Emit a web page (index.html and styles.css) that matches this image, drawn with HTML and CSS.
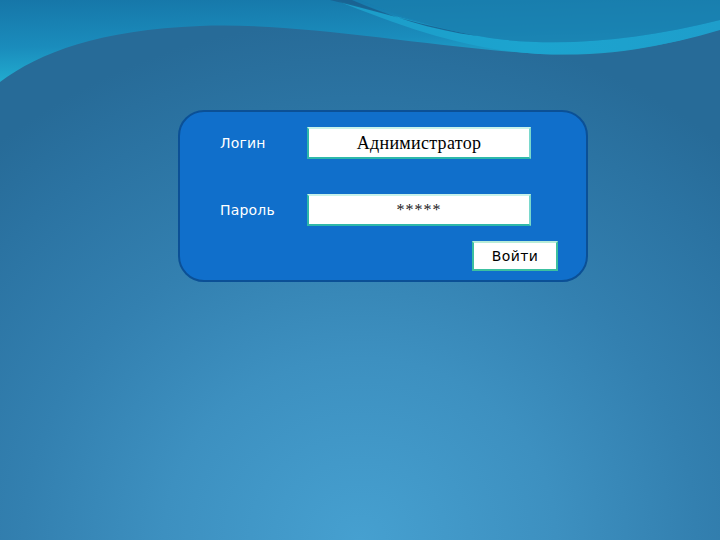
FILE: index.html
```html
<!DOCTYPE html>
<html lang="ru">
<head>
<meta charset="utf-8">
<title>Вход</title>
<link rel="stylesheet" href="styles.css">
</head>
<body>
<div class="page">
  <svg class="waves" width="720" height="90" viewBox="0 0 720 90" aria-hidden="true">
    <defs>
      <linearGradient id="band" x1="0" y1="0" x2="0.25" y2="1">
        <stop offset="0" stop-color="#1676a8"/>
        <stop offset="0.55" stop-color="#1a8cbc"/>
        <stop offset="1" stop-color="#22b0d2"/>
      </linearGradient>
      <linearGradient id="light" x1="0" y1="0" x2="1" y2="0">
        <stop offset="0" stop-color="#1c9cc8"/>
        <stop offset="0.5" stop-color="#1ca4cf"/>
        <stop offset="1" stop-color="#1e9ecb"/>
      </linearGradient>
    </defs>
    <path d="M0 0 L720 0 L720 28 C680 42 620 58 540 54 C420 46 300 22 200 26 C100 30 40 52 0 82 Z" fill="url(#band)"/>
    <path d="M335 0 C390 14 440 30 490 38 C560 48 640 40 720 20 L720 30 C660 48 600 56 540 54 C470 50 410 30 335 0 Z" fill="url(#light)"/>
    <path d="M330 0 C380 12 425 26 478 36 C430 30 390 16 352 0 Z" fill="#1a5f8e" opacity="0.85"/>
    <path d="M360 0 L720 0 L720 20 C640 40 560 48 490 38 C440 30 400 16 360 0 Z" fill="#1a7fae" opacity="0.7"/>
  </svg>
  <form class="panel">
    <div class="grid">
      <label class="label">Логин</label>
      <div class="field serif">Аднимистратор</div>
      <label class="label">Пароль</label>
      <div class="field serif stars">*****</div>
    </div>
    <div class="actions">
      <div class="button">Войти</div>
    </div>
  </form>
</div>
</body>
</html>
```

FILE: styles.css
```css
html, body {
  margin: 0;
  padding: 0;
}
body {
  width: 720px;
  height: 540px;
  overflow: hidden;
  font-family: "DejaVu Sans", "Liberation Sans", sans-serif;
}
.page {
  position: relative;
  width: 720px;
  height: 540px;
  background: radial-gradient(ellipse 560px 520px at 50% 100%, #46a0d0 0%, #3d90c0 35%, #3380b0 60%, #2b73a2 85%, #276b98 100%);
  overflow: hidden;
}
.waves {
  position: absolute;
  left: 0;
  top: 0;
  display: block;
}
.panel {
  position: relative;
  margin: 0;
  top: 110px;
  left: 178px;
  width: 406px;
  height: 168px;
  box-sizing: content-box;
  border: 2px solid #0b5096;
  border-radius: 26px;
  background: #106fcb;
  padding: 0;
}
.grid {
  display: grid;
  grid-template-columns: 87px 224px;
  row-gap: 35px;
  padding: 15px 0 0 40px;
  align-items: center;
}
.label {
  color: #ffffff;
  font-size: 14px;
  letter-spacing: 0.2px;
}
.field {
  box-sizing: border-box;
  height: 32px;
  background: #ffffff;
  border: 2px solid #2eb8aa;
  border-top-color: #c8f2ea;
  border-right-color: #7ad8cc;
  display: flex;
  align-items: center;
  justify-content: center;
}
.serif {
  font-family: "Liberation Serif", "DejaVu Serif", serif;
  font-size: 18px;
  color: #000000;
  letter-spacing: 0.3px;
}
.stars {
  font-size: 16px;
  color: #222222;
  letter-spacing: 1px;
}
.actions {
  display: flex;
  padding: 15px 0 0 292px;
}
.button {
  box-sizing: border-box;
  width: 86px;
  height: 30px;
  background: #ffffff;
  border: 2px solid #3cc0a0;
  border-top-color: #b8ecd8;
  display: flex;
  align-items: center;
  justify-content: center;
  font-size: 14px;
  color: #000000;
  letter-spacing: 0.4px;
}
```
